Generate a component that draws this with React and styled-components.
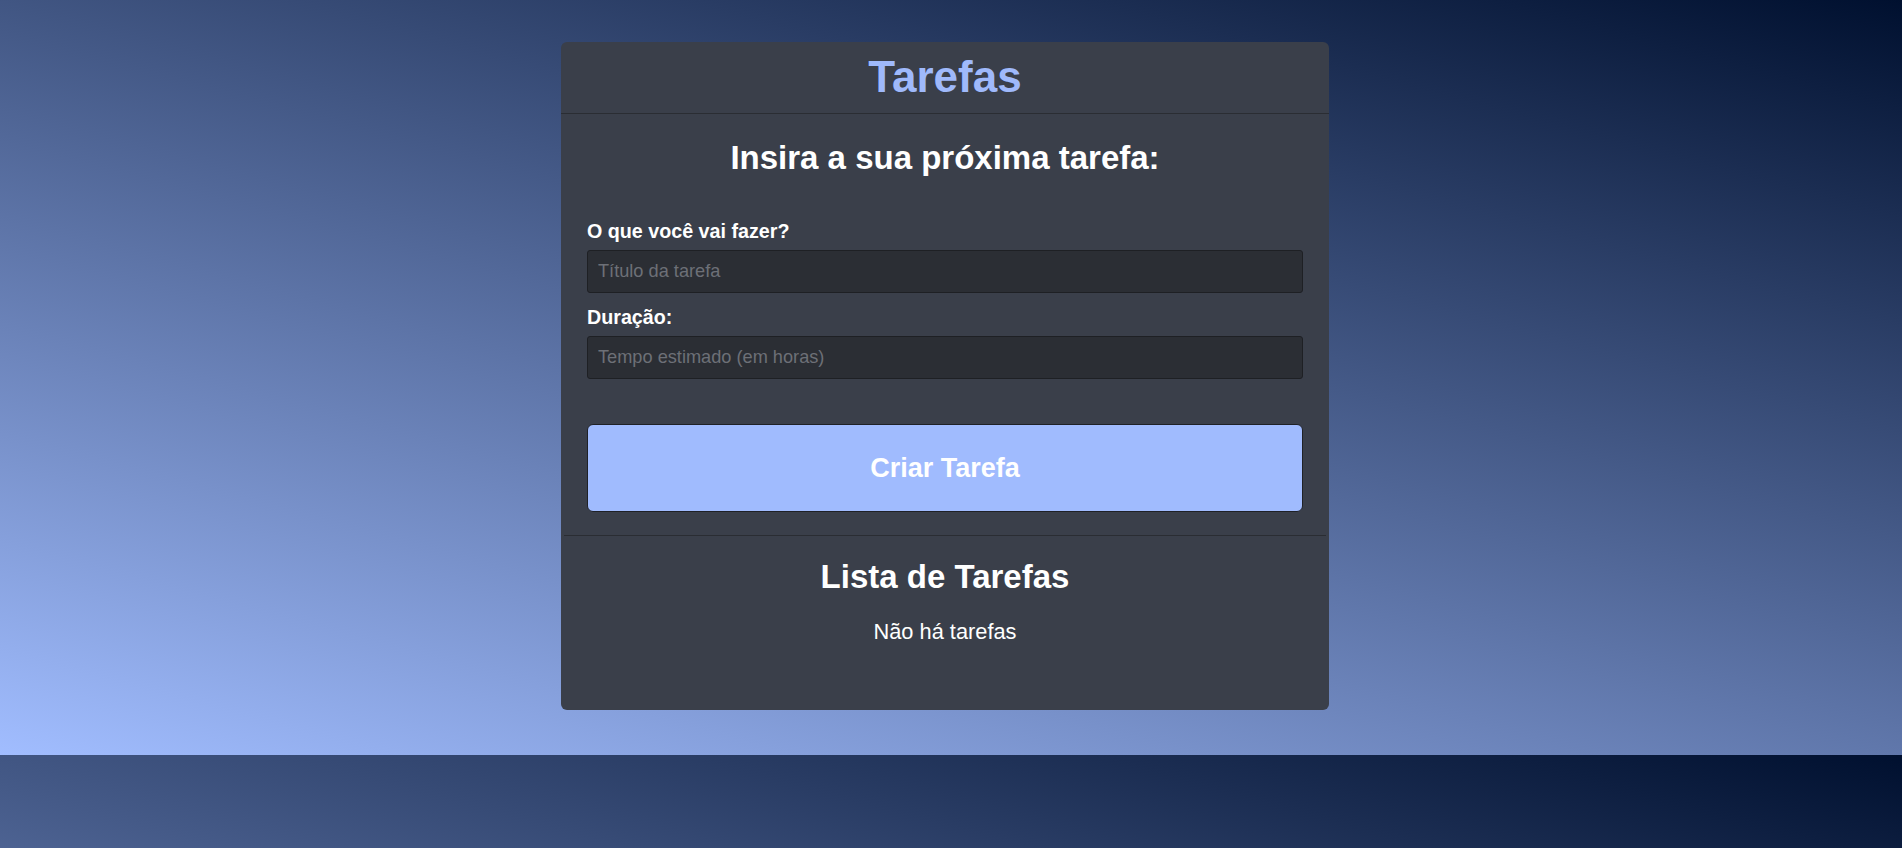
import React from "react";
import styled, { createGlobalStyle } from "styled-components";

const GlobalStyle = createGlobalStyle`
  html {
    background: linear-gradient(15deg, #a1bdff 0%, #00102f 100%);
  }
  body {
    margin: 0;
    font-family: "Liberation Sans", Arial, sans-serif;
  }
  * {
    box-sizing: border-box;
  }
`;

const Page = styled.div`
  display: flex;
  justify-content: center;
  padding: 42px 12px 45px 0;
`;

const Card = styled.div`
  width: 768px;
  background-color: #3a3f4a;
  border-radius: 6px;
  color: #fff;
  display: flex;
  flex-direction: column;
`;

const Header = styled.header`
  height: 72px;
  border-bottom: 1px solid #2a2d33;
  text-align: center;
`;

const Title = styled.h1`
  margin: 0;
  font-size: 44px;
  line-height: 70px;
  font-weight: bold;
  color: #9fb9fb;
`;

const FormSection = styled.form`
  display: flex;
  flex-direction: column;
  padding: 25px 26px 23px;
`;

const SectionTitle = styled.h2`
  margin: 0 0 ${(p) => p.$gap}px;
  font-size: 33px;
  line-height: 38px;
  font-weight: bold;
  text-align: center;
  color: #fff;
`;

const Field = styled.div`
  display: flex;
  flex-direction: column;
  gap: 8px;
  & + & {
    margin-top: 13px;
  }
`;

const Label = styled.label`
  font-size: 19.7px;
  line-height: 22px;
  font-weight: bold;
  color: #fff;
`;

const Input = styled.input`
  height: 43px;
  width: 100%;
  padding: 0 10px;
  background: #2b2e34;
  border: 1px solid #1e2024;
  border-radius: 3px;
  color: #fff;
  font-family: inherit;
  font-size: 18.2px;
  outline: none;
  &::placeholder {
    color: #6d7077;
  }
`;

const Button = styled.button`
  margin-top: 45px;
  height: 88px;
  width: 100%;
  background: #a0bbfe;
  border: 1px solid #1f2126;
  border-radius: 6px;
  color: #fff;
  font-family: inherit;
  font-size: 27px;
  font-weight: bold;
  cursor: pointer;
`;

const ListSection = styled.section`
  margin: 0 3px;
  border-top: 1px solid #2a2d33;
  padding: 22px 0 66px;
  text-align: center;
`;

const Empty = styled.p`
  margin: 0;
  font-size: 21.8px;
  line-height: 23.5px;
  color: #fff;
`;

export default function App() {
  return (
    <>
      <GlobalStyle />
      <Page>
        <Card>
          <Header>
            <Title>Tarefas</Title>
          </Header>
          <FormSection onSubmit={(e) => e.preventDefault()}>
            <SectionTitle $gap={43}>Insira a sua próxima tarefa:</SectionTitle>
            <Field>
              <Label htmlFor="titulo">O que você vai fazer?</Label>
              <Input id="titulo" placeholder="Título da tarefa" />
            </Field>
            <Field>
              <Label htmlFor="duracao">Duração:</Label>
              <Input id="duracao" placeholder="Tempo estimado (em horas)" />
            </Field>
            <Button type="submit">Criar Tarefa</Button>
          </FormSection>
          <ListSection>
            <SectionTitle $gap={24}>Lista de Tarefas</SectionTitle>
            <Empty>Não há tarefas</Empty>
          </ListSection>
        </Card>
      </Page>
    </>
  );
}
